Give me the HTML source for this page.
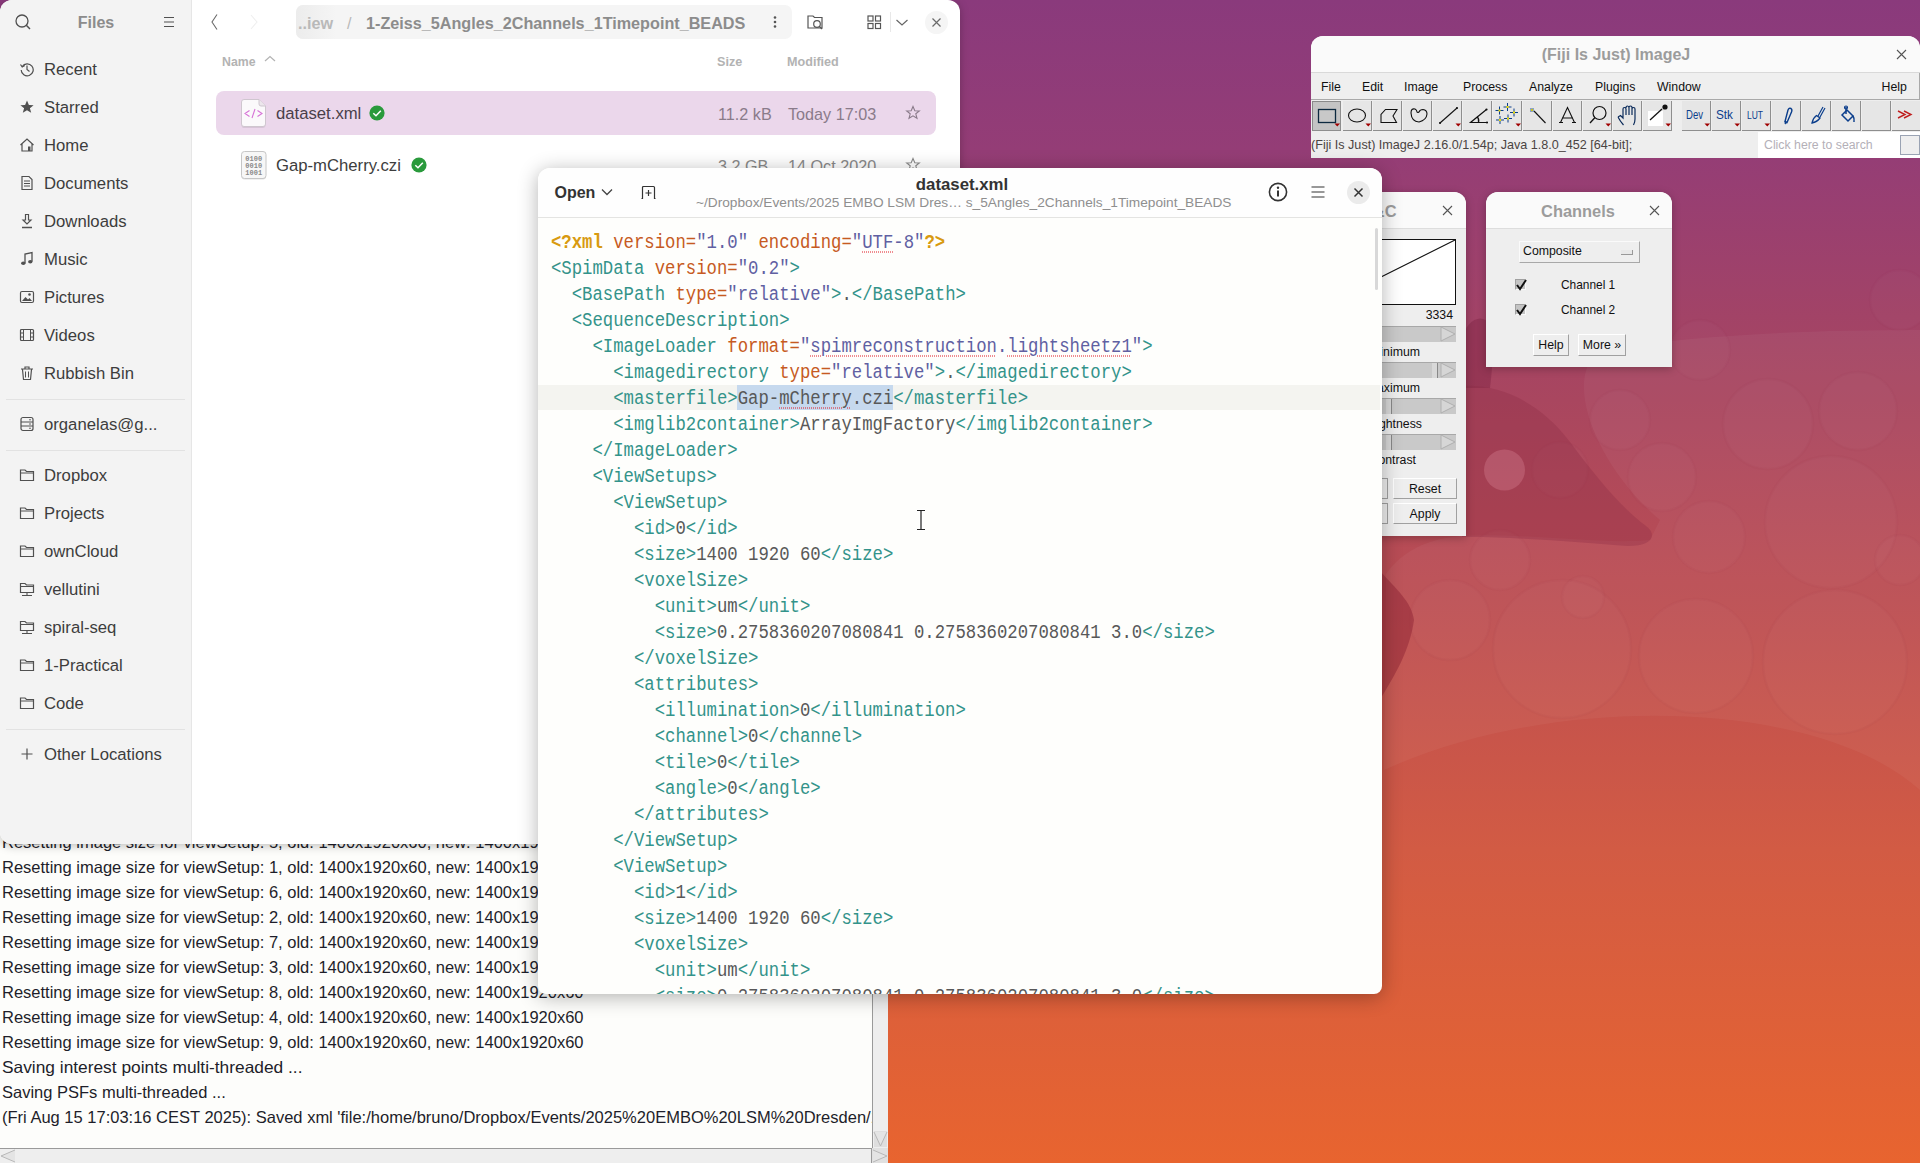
<!DOCTYPE html>
<html><head><meta charset="utf-8"><style>
*{box-sizing:border-box;margin:0;padding:0}
html,body{width:1920px;height:1163px;overflow:hidden}
body{position:relative;font-family:"Liberation Sans",sans-serif;background:linear-gradient(180deg,#8a3a7c 0px,#943d76 150px,#a9465f 400px,#bf4f50 630px,#d25b44 850px,#e8642f 1163px)}
.a{position:absolute}
.t{position:absolute;line-height:0;white-space:pre}
.s{font-family:"Liberation Sans",sans-serif}
.m{font-family:"Liberation Mono",monospace}
.win{position:absolute;overflow:hidden}
</style></head><body>
<svg class="a" style="left:0px;top:0px;" width="1920" height="1163" viewBox="0 0 1920 1163"><path d="M1386,574 C1400,555 1420,540 1460,536 C1520,532 1600,545 1650,540 L1660,520 C1600,470 1560,380 1600,350 C1700,335 1800,330 1920,330 L1920,790 C1820,700 1560,690 1384,770 Z" fill="#ffffff" fill-opacity="0.045"/><circle cx="1831" cy="522" r="66" fill="#ffffff" fill-opacity="0.018" stroke="#801830" stroke-opacity="0.03" stroke-width="2.5"/><circle cx="1709" cy="537" r="36" fill="#ffffff" fill-opacity="0.018" stroke="#801830" stroke-opacity="0.03" stroke-width="2.5"/><circle cx="1696" cy="656" r="57" fill="#ffffff" fill-opacity="0.018" stroke="#801830" stroke-opacity="0.03" stroke-width="2.5"/><circle cx="1562" cy="649" r="69" fill="#ffffff" fill-opacity="0.018" stroke="#801830" stroke-opacity="0.03" stroke-width="2.5"/><circle cx="1835" cy="662" r="72" fill="#ffffff" fill-opacity="0.018" stroke="#801830" stroke-opacity="0.03" stroke-width="2.5"/><circle cx="1662" cy="477" r="34" fill="#ffffff" fill-opacity="0.018" stroke="#801830" stroke-opacity="0.03" stroke-width="2.5"/><circle cx="1768" cy="424" r="45" fill="#ffffff" fill-opacity="0.018" stroke="#801830" stroke-opacity="0.03" stroke-width="2.5"/><circle cx="1858" cy="411" r="39" fill="#ffffff" fill-opacity="0.018" stroke="#801830" stroke-opacity="0.03" stroke-width="2.5"/><circle cx="1583" cy="597" r="21" fill="#ffffff" fill-opacity="0.018" stroke="#801830" stroke-opacity="0.03" stroke-width="2.5"/><circle cx="1500" cy="560" r="30" fill="#ffffff" fill-opacity="0.018" stroke="#801830" stroke-opacity="0.03" stroke-width="2.5"/><circle cx="1620" cy="420" r="30" fill="#ffffff" fill-opacity="0.018" stroke="#801830" stroke-opacity="0.03" stroke-width="2.5"/><circle cx="1560" cy="470" r="28" fill="#ffffff" fill-opacity="0.018" stroke="#801830" stroke-opacity="0.03" stroke-width="2.5"/><circle cx="1450" cy="620" r="40" fill="#ffffff" fill-opacity="0.018" stroke="#801830" stroke-opacity="0.03" stroke-width="2.5"/><circle cx="1900" cy="560" r="25" fill="#ffffff" fill-opacity="0.018" stroke="#801830" stroke-opacity="0.03" stroke-width="2.5"/><circle cx="1900" cy="300" r="30" fill="#ffffff" fill-opacity="0.018" stroke="#801830" stroke-opacity="0.03" stroke-width="2.5"/><circle cx="1700" cy="350" r="30" fill="#ffffff" fill-opacity="0.018" stroke="#801830" stroke-opacity="0.03" stroke-width="2.5"/><path d="M1462,340 C1466,318 1486,310 1492,330 C1494,350 1492,370 1490,388 L1462,388 Z" fill="#7a2040" fill-opacity="0.4"/><path d="M1462,386 C1500,384 1540,402 1570,442 C1600,482 1622,508 1646,526 C1658,535 1652,546 1628,546 C1580,542 1500,536 1462,537 Z" fill="#8c2a44" fill-opacity="0.32"/><circle cx="1504.5" cy="470" r="20.5" fill="#e090a0" fill-opacity="0.3"/><path d="M1381,572 C1395,588 1412,602 1414,620 C1410,650 1395,675 1381,698 Z" fill="#8a2030" fill-opacity="0.45"/></svg>
<div class="win" style="left:1311px;top:36px;width:609px;height:122px;background:#eeeeee;border-radius:12px 12px 0 0"><div class="a" style="left:-1311px;top:-36px">
<div class="a" style="left:1311px;top:36px;width:609px;height:36px;background:#fafafa;"></div>
<div class="a" style="left:1311px;top:72px;width:609px;height:1px;background:#d9d9d9;"></div>
<div class="a" style="left:1311px;top:73px;width:609px;height:26px;background:#efefef;"></div>
<div class="a" style="left:1311px;top:99px;width:609px;height:1px;background:#a9a9a9;"></div>
<div class="a" style="left:1919px;top:73px;width:1px;height:26px;background:#a9a9a9;"></div>
<div class="t s" style="left:1616px;top:55.46px;font-size:16px;color:#9c9c9c;font-weight:700;transform:translateX(-50%);">(Fiji Is Just) ImageJ</div>
<svg class="a" style="left:1896px;top:49px;" width="11" height="11" viewBox="0 0 11 11"><path d="M1,1L10,10M10,1L1,10" stroke="#555" stroke-width="1.1"/></svg>
<div class="t s" style="left:1321px;top:86.74px;font-size:12.3px;color:#111111;">File</div>
<div class="t s" style="left:1362px;top:86.74px;font-size:12.3px;color:#111111;">Edit</div>
<div class="t s" style="left:1404px;top:86.74px;font-size:12.3px;color:#111111;">Image</div>
<div class="t s" style="left:1463px;top:86.74px;font-size:12.3px;color:#111111;">Process</div>
<div class="t s" style="left:1529px;top:86.74px;font-size:12.3px;color:#111111;">Analyze</div>
<div class="t s" style="left:1595px;top:86.74px;font-size:12.3px;color:#111111;">Plugins</div>
<div class="t s" style="left:1657px;top:86.74px;font-size:12.3px;color:#111111;">Window</div>
<div class="t s" style="left:1881.5px;top:86.74px;font-size:12.3px;color:#111111;">Help</div>
<div class="a" style="left:1312px;top:101px;width:29px;height:30px;background:#c4c4c4;border-right:1px solid #8e8e8e;border-bottom:1px solid #8e8e8e;border-left:1px solid #8a8a8a;border-top:1px solid #8a8a8a;"></div>
<svg class="a" style="left:1312px;top:101px;" width="29" height="28" viewBox="0 0 29 28"><g transform="translate(2,1)"><rect x="4.5" y="7.5" width="17" height="13" fill="#c8c8c8" stroke="#0d2a40" stroke-width="1.3"/></g><path d="M22.5,22.5 L28,22.5 L25.25,25.5 Z" fill="#a00000"/></svg>
<div class="a" style="left:1343px;top:101px;width:29px;height:30px;background:#e6e6e6;border-right:1px solid #8e8e8e;border-bottom:1px solid #8e8e8e;"></div>
<svg class="a" style="left:1343px;top:101px;" width="29" height="28" viewBox="0 0 29 28"><g transform="translate(2,1)"><ellipse cx="12" cy="13.5" rx="8.5" ry="6.5" fill="none" stroke="#111" stroke-width="1.1"/></g><path d="M22.5,22.5 L28,22.5 L25.25,25.5 Z" fill="#a00000"/></svg>
<div class="a" style="left:1373px;top:101px;width:29px;height:30px;background:#e6e6e6;border-right:1px solid #8e8e8e;border-bottom:1px solid #8e8e8e;"></div>
<svg class="a" style="left:1373px;top:101px;" width="29" height="28" viewBox="0 0 29 28"><g transform="translate(2,1)"><path d="M6,20.5 V12.5 L10.5,7.5 H22 L18,14 L21.5,20.5 Z" fill="none" stroke="#111" stroke-width="1.1"/></g></svg>
<div class="a" style="left:1403px;top:101px;width:29px;height:30px;background:#e6e6e6;border-right:1px solid #8e8e8e;border-bottom:1px solid #8e8e8e;"></div>
<svg class="a" style="left:1403px;top:101px;" width="29" height="28" viewBox="0 0 29 28"><g transform="translate(2,1)"><path d="M6,11 Q6,6 10,7 Q12,8 12,10 Q12.5,11 14,10 Q15,7.5 18,7.5 Q22,8 22,12 Q21.5,18 14,20 Q6.5,19.5 6,11 Z" fill="none" stroke="#111" stroke-width="1.1"/></g></svg>
<div class="a" style="left:1433px;top:101px;width:29px;height:30px;background:#e6e6e6;border-right:1px solid #8e8e8e;border-bottom:1px solid #8e8e8e;"></div>
<svg class="a" style="left:1433px;top:101px;" width="29" height="28" viewBox="0 0 29 28"><g transform="translate(2,1)"><path d="M5,21 L22,6" stroke="#111" stroke-width="1.1"/><circle cx="5" cy="21" r="1.1" fill="#111"/><circle cx="22" cy="6" r="1.1" fill="#111"/></g><path d="M22.5,22.5 L28,22.5 L25.25,25.5 Z" fill="#a00000"/></svg>
<div class="a" style="left:1463px;top:101px;width:29px;height:30px;background:#e6e6e6;border-right:1px solid #8e8e8e;border-bottom:1px solid #8e8e8e;"></div>
<svg class="a" style="left:1463px;top:101px;" width="29" height="28" viewBox="0 0 29 28"><g transform="translate(2,1)"><path d="M21.5,7.5 L5.5,20.5 H22 M12,14.5 Q14.5,17 13.5,20.5" fill="none" stroke="#111" stroke-width="1.2"/><circle cx="21.5" cy="7.5" r="1.1" fill="#111"/><circle cx="22" cy="20.5" r="1.1" fill="#111"/></g></svg>
<div class="a" style="left:1493px;top:101px;width:29px;height:30px;background:#e6e6e6;border-right:1px solid #8e8e8e;border-bottom:1px solid #8e8e8e;"></div>
<svg class="a" style="left:1493px;top:101px;" width="29" height="28" viewBox="0 0 29 28"><g transform="translate(2,1)"><path d="M0.5,8.5 H8.5 M4.5,4.5 V12.5" stroke="#0b3e8c" stroke-width="1"/><rect x="3.5" y="7.5" width="2" height="2" fill="#f0e000"/><path d="M8.5,5 H16.5 M12.5,1 V9" stroke="#0b3e8c" stroke-width="1"/><rect x="11.5" y="4" width="2" height="2" fill="#f0e000"/><path d="M15,10.5 H23 M19,6.5 V14.5" stroke="#0b3e8c" stroke-width="1"/><rect x="18" y="9.5" width="2" height="2" fill="#f0e000"/><path d="M1,18 H9 M5,14 V22" stroke="#0b3e8c" stroke-width="1"/><rect x="4" y="17" width="2" height="2" fill="#f0e000"/><path d="M9,16.5 H17 M13,12.5 V20.5" stroke="#0b3e8c" stroke-width="1"/><rect x="12" y="15.5" width="2" height="2" fill="#f0e000"/></g><path d="M22.5,22.5 L28,22.5 L25.25,25.5 Z" fill="#a00000"/></svg>
<div class="a" style="left:1523px;top:101px;width:29px;height:30px;background:#e6e6e6;border-right:1px solid #8e8e8e;border-bottom:1px solid #8e8e8e;"></div>
<svg class="a" style="left:1523px;top:101px;" width="29" height="28" viewBox="0 0 29 28"><g transform="translate(2,1)"><path d="M9,9 L20.5,21" stroke="#111" stroke-width="1.1"/><path d="M5,8 H9 M7,6 V10 M5.5,6.5 L8.5,9.5 M8.5,6.5 L5.5,9.5" stroke="#0b3e8c" stroke-width=".8"/><circle cx="7" cy="8" r="1.1" fill="#f0e000"/></g></svg>
<div class="a" style="left:1553px;top:101px;width:29px;height:30px;background:#e6e6e6;border-right:1px solid #8e8e8e;border-bottom:1px solid #8e8e8e;"></div>
<svg class="a" style="left:1553px;top:101px;" width="29" height="28" viewBox="0 0 29 28"><g transform="translate(2,1)"><path d="M5.5,20.5 L12.5,5.5 L19.5,20.5 M7,16 H18 M4,20.5H8 M17,20.5H21" fill="none" stroke="#111" stroke-width="1.1"/></g></svg>
<div class="a" style="left:1583px;top:101px;width:29px;height:30px;background:#e6e6e6;border-right:1px solid #8e8e8e;border-bottom:1px solid #8e8e8e;"></div>
<svg class="a" style="left:1583px;top:101px;" width="29" height="28" viewBox="0 0 29 28"><g transform="translate(2,1)"><circle cx="14.5" cy="11" r="6.5" fill="none" stroke="#111" stroke-width="1.2"/><path d="M10,15.5 L5,21" stroke="#111" stroke-width="1.3"/></g><path d="M22.5,22.5 L28,22.5 L25.25,25.5 Z" fill="#a00000"/></svg>
<div class="a" style="left:1613px;top:101px;width:29px;height:30px;background:#e6e6e6;border-right:1px solid #8e8e8e;border-bottom:1px solid #8e8e8e;"></div>
<svg class="a" style="left:1613px;top:101px;" width="29" height="28" viewBox="0 0 29 28"><g transform="translate(2,1)"><path d="M3,15 L5.5,13.5 L8,16 V7 Q8,5.5 9.5,5.5 Q11,5.5 11,7 V13 M11,6 Q11,4 12.5,4 Q14,4 14,6 V13 M14,5.5 Q14,4 15.5,4 Q17,4 17,5.5 V13 M17,7 Q17,5.5 18.5,5.5 Q20,5.5 20,7 V17 Q20,20.5 18.5,23 M3,15 Q5,19 8.5,23" fill="none" stroke="#0a2a5a" stroke-width="1.2"/></g></svg>
<div class="a" style="left:1643px;top:101px;width:29px;height:30px;background:#e6e6e6;border-right:1px solid #8e8e8e;border-bottom:1px solid #8e8e8e;"></div>
<svg class="a" style="left:1643px;top:101px;" width="29" height="28" viewBox="0 0 29 28"><g transform="translate(2,1)"><rect x="3" y="9" width="15" height="15" fill="#fff"/><path d="M5,18 L17,7" stroke="#111" stroke-width="1.3"/><circle cx="20" cy="5" r="2.6" fill="#111"/></g><path d="M22.5,22.5 L28,22.5 L25.25,25.5 Z" fill="#a00000"/></svg>
<div class="a" style="left:1682px;top:101px;width:29px;height:30px;background:#e6e6e6;border-right:1px solid #8e8e8e;border-bottom:1px solid #8e8e8e;"></div>
<svg class="a" style="left:1682px;top:101px;" width="29" height="28" viewBox="0 0 29 28"><g transform="translate(2,1)"><text x="2" y="17" font-family="Liberation Sans" font-size="12" fill="#0b3e8c" textLength="17" lengthAdjust="spacingAndGlyphs">Dev</text></g><path d="M22.5,22.5 L28,22.5 L25.25,25.5 Z" fill="#a00000"/></svg>
<div class="a" style="left:1712px;top:101px;width:29px;height:30px;background:#e6e6e6;border-right:1px solid #8e8e8e;border-bottom:1px solid #8e8e8e;"></div>
<svg class="a" style="left:1712px;top:101px;" width="29" height="28" viewBox="0 0 29 28"><g transform="translate(2,1)"><text x="2" y="17" font-family="Liberation Sans" font-size="12" fill="#0b3e8c" textLength="17" lengthAdjust="spacingAndGlyphs">Stk</text></g><path d="M22.5,22.5 L28,22.5 L25.25,25.5 Z" fill="#a00000"/></svg>
<div class="a" style="left:1742px;top:101px;width:29px;height:30px;background:#e6e6e6;border-right:1px solid #8e8e8e;border-bottom:1px solid #8e8e8e;"></div>
<svg class="a" style="left:1742px;top:101px;" width="29" height="28" viewBox="0 0 29 28"><g transform="translate(2,1)"><text x="3" y="17" font-family="Liberation Sans" font-size="11.5" fill="#0b3e8c" textLength="16" lengthAdjust="spacingAndGlyphs">LUT</text></g><path d="M22.5,22.5 L28,22.5 L25.25,25.5 Z" fill="#a00000"/></svg>
<div class="a" style="left:1772px;top:101px;width:29px;height:30px;background:#e6e6e6;border-right:1px solid #8e8e8e;border-bottom:1px solid #8e8e8e;"></div>
<svg class="a" style="left:1772px;top:101px;" width="29" height="28" viewBox="0 0 29 28"><g transform="translate(2,1)"><path d="M11,19.5 L14,8 Q15,5.5 17,6.5 Q18.5,7.5 17.5,10 L13,20.5 Z" fill="none" stroke="#0b3e8c" stroke-width="1.4"/><path d="M11,19.5 L11.2,22 L13,20.5 Z" fill="#0b3e8c" stroke="#0b3e8c"/></g></svg>
<div class="a" style="left:1802px;top:101px;width:29px;height:30px;background:#e6e6e6;border-right:1px solid #8e8e8e;border-bottom:1px solid #8e8e8e;"></div>
<svg class="a" style="left:1802px;top:101px;" width="29" height="28" viewBox="0 0 29 28"><g transform="translate(2,1)"><path d="M14,14 L19,5 M16,15 L21,6" stroke="#0b3e8c" stroke-width="1.2"/><path d="M8,21 Q9,16 12.5,13.5 L16,16 Q13,20 8,21 Z" fill="none" stroke="#0b3e8c" stroke-width="1.3"/></g></svg>
<div class="a" style="left:1832px;top:101px;width:29px;height:30px;background:#e6e6e6;border-right:1px solid #8e8e8e;border-bottom:1px solid #8e8e8e;"></div>
<svg class="a" style="left:1832px;top:101px;" width="29" height="28" viewBox="0 0 29 28"><g transform="translate(2,1)"><path d="M8,13 L13,8 L19,14 L14,19 Z" fill="none" stroke="#0b3e8c" stroke-width="1.5"/><path d="M12,5 V12 M19,14 Q20.5,16 20,20" fill="none" stroke="#0b3e8c" stroke-width="1.5"/><circle cx="12" cy="5.5" r="1.5" fill="none" stroke="#0b3e8c" stroke-width="1.2"/></g></svg>
<div class="a" style="left:1862px;top:101px;width:29px;height:30px;background:#e6e6e6;border-right:1px solid #8e8e8e;border-bottom:1px solid #8e8e8e;"></div>
<svg class="a" style="left:1862px;top:101px;" width="29" height="28" viewBox="0 0 29 28"><g transform="translate(2,1)"></g></svg>
<div class="a" style="left:1892px;top:101px;width:29px;height:30px;background:#e6e6e6;border-right:1px solid #8e8e8e;border-bottom:1px solid #8e8e8e;"></div>
<svg class="a" style="left:1892px;top:101px;" width="29" height="28" viewBox="0 0 29 28"><g transform="translate(2,1)"><path d="M4,9 L11,12.5 L4,16 M10,9 L17,12.5 L10,16" fill="none" stroke="#c02020" stroke-width="1.4"/></g></svg>
<div class="t s" style="left:1311px;top:145.13px;font-size:12.6px;color:#4a4442;">(Fiji Is Just) ImageJ 2.16.0/1.54p; Java 1.8.0_452 [64-bit];</div>
<div class="a" style="left:1758px;top:132px;width:162px;height:26px;background:#ffffff;"></div>
<div class="t s" style="left:1764px;top:145.24px;font-size:12.3px;color:#b4b0b8;">Click here to search</div>
<div class="a" style="left:1900px;top:135px;width:20px;height:20px;background:#eeeeee;border:1px solid #9aa3b3"></div>
</div></div>
<div class="win" style="left:1300px;top:192px;width:166px;height:344px;background:#eeeeee;border-radius:12px 12px 0 0;box-shadow:0 2px 8px rgba(0,0,0,.25)"><div class="a" style="left:-1300px;top:-192px">
<div class="a" style="left:1300px;top:192px;width:166px;height:36px;background:#fafafa;"></div>
<div class="a" style="left:1300px;top:228px;width:166px;height:1px;background:#dddddd;"></div>
<div class="t s" style="left:1361px;top:211.32px;font-size:16.4px;color:#9c9c9c;font-weight:700;">B&amp;C</div>
<svg class="a" style="left:1442px;top:205px;" width="11" height="11" viewBox="0 0 11 11"><path d="M1,1L10,10M10,1L1,10" stroke="#555" stroke-width="1.1"/></svg>
<div class="a" style="left:1300px;top:239px;width:156px;height:66px;background:#ffffff;border:1.5px solid #111"></div>
<svg class="a" style="left:1300px;top:239px;" width="156" height="66" viewBox="0 0 156 66"><path d="M40,58.5 L155,1" stroke="#111" stroke-width="1.1"/></svg>
<div class="t s" style="left:1453px;top:314.74px;font-size:12.3px;color:#111;transform:translateX(-100%);">3334</div>
<div class="a" style="left:1300px;top:326px;width:156px;height:16px;background:#c9c9c9;border-top:1px solid #a8a8a8"></div>
<svg class="a" style="left:1440px;top:326px;" width="16" height="16" viewBox="0 0 16 16"><path d="M1,1 L15,8 L1,15 Z" fill="#d6d6d6" stroke="#b0b0b0" stroke-width="1"/></svg>
<div class="t s" style="left:1420px;top:352.24px;font-size:12.3px;color:#111;transform:translateX(-100%);">Minimum</div>
<div class="a" style="left:1300px;top:362px;width:156px;height:16px;background:#c9c9c9;border-top:1px solid #a8a8a8"></div>
<svg class="a" style="left:1440px;top:362px;" width="16" height="16" viewBox="0 0 16 16"><path d="M1,1 L15,8 L1,15 Z" fill="#d6d6d6" stroke="#b0b0b0" stroke-width="1"/></svg>
<div class="a" style="left:1432px;top:363px;width:6px;height:15px;background:#d8d8d8;border-right:1px solid #888"></div>
<div class="t s" style="left:1420px;top:388.24px;font-size:12.3px;color:#111;transform:translateX(-100%);">Maximum</div>
<div class="a" style="left:1300px;top:398px;width:156px;height:16px;background:#c9c9c9;border-top:1px solid #a8a8a8"></div>
<svg class="a" style="left:1440px;top:398px;" width="16" height="16" viewBox="0 0 16 16"><path d="M1,1 L15,8 L1,15 Z" fill="#d6d6d6" stroke="#b0b0b0" stroke-width="1"/></svg>
<div class="a" style="left:1386px;top:399px;width:6px;height:15px;background:#d8d8d8;border-right:1px solid #888"></div>
<div class="t s" style="left:1422px;top:424.24px;font-size:12.3px;color:#111;transform:translateX(-100%);">Brightness</div>
<div class="a" style="left:1300px;top:434px;width:156px;height:16px;background:#c9c9c9;border-top:1px solid #a8a8a8"></div>
<svg class="a" style="left:1440px;top:434px;" width="16" height="16" viewBox="0 0 16 16"><path d="M1,1 L15,8 L1,15 Z" fill="#d6d6d6" stroke="#b0b0b0" stroke-width="1"/></svg>
<div class="a" style="left:1386px;top:435px;width:6px;height:15px;background:#d8d8d8;border-right:1px solid #888"></div>
<div class="t s" style="left:1416px;top:460.24px;font-size:12.3px;color:#111;transform:translateX(-100%);">Contrast</div>
<div class="a" style="left:1393px;top:478px;width:64px;height:21px;background:#eeeeee;border:1px solid #a0a0a0;border-top-color:#fff;border-left-color:#fff"></div>
<div class="t s" style="left:1425px;top:488.74px;font-size:12.3px;color:#111;transform:translateX(-50%);">Reset</div>
<div class="a" style="left:1300px;top:478px;width:88px;height:21px;background:#eeeeee;border:1px solid #a0a0a0"></div>
<div class="a" style="left:1393px;top:503px;width:64px;height:21px;background:#eeeeee;border:1px solid #a0a0a0;border-top-color:#fff;border-left-color:#fff"></div>
<div class="t s" style="left:1425px;top:513.74px;font-size:12.3px;color:#111;transform:translateX(-50%);">Apply</div>
<div class="a" style="left:1300px;top:503px;width:88px;height:21px;background:#eeeeee;border:1px solid #a0a0a0"></div>
</div></div>
<div class="win" style="left:1486px;top:192px;width:186px;height:175px;background:#eeeeee;border-radius:12px 12px 0 0;box-shadow:0 2px 8px rgba(0,0,0,.25)"><div class="a" style="left:-1486px;top:-192px">
<div class="a" style="left:1486px;top:192px;width:186px;height:36px;background:#fafafa;"></div>
<div class="a" style="left:1486px;top:228px;width:186px;height:1px;background:#dddddd;"></div>
<div class="t s" style="left:1578px;top:211.32px;font-size:16.4px;color:#9c9c9c;font-weight:700;transform:translateX(-50%);">Channels</div>
<svg class="a" style="left:1649px;top:205px;" width="11" height="11" viewBox="0 0 11 11"><path d="M1,1L10,10M10,1L1,10" stroke="#555" stroke-width="1.1"/></svg>
<div class="a" style="left:1519px;top:241px;width:121px;height:22px;background:#eeeeee;border:1px solid #a8a8a8;border-top-color:#fafafa;border-left-color:#fafafa"></div>
<div class="t s" style="left:1523px;top:250.74px;font-size:12.3px;color:#111;">Composite</div>
<div class="a" style="left:1621px;top:250px;width:12px;height:5px;background:#e8e8e8;border-right:1px solid #999;border-bottom:1px solid #999"></div>
<div class="a" style="left:1515px;top:279px;width:11px;height:11px;background:#c4c4c4;border-top:1px solid #a0a0a0;border-left:1px solid #a0a0a0;border-right:1px solid #fafafa;border-bottom:1px solid #fafafa"></div>
<svg class="a" style="left:1514px;top:278px;" width="14" height="14" viewBox="0 0 14 14"><path d="M3,7 L6,11 L12,2" fill="none" stroke="#111" stroke-width="2"/></svg>
<div class="t s" style="left:1561px;top:285.38px;font-size:11.9px;color:#111;">Channel 1</div>
<div class="a" style="left:1515px;top:304px;width:11px;height:11px;background:#c4c4c4;border-top:1px solid #a0a0a0;border-left:1px solid #a0a0a0;border-right:1px solid #fafafa;border-bottom:1px solid #fafafa"></div>
<svg class="a" style="left:1514px;top:303px;" width="14" height="14" viewBox="0 0 14 14"><path d="M3,7 L6,11 L12,2" fill="none" stroke="#111" stroke-width="2"/></svg>
<div class="t s" style="left:1561px;top:309.88px;font-size:11.9px;color:#111;">Channel 2</div>
<div class="a" style="left:1533px;top:334px;width:36px;height:22px;background:#eeeeee;border:1px solid #a0a0a0;border-top-color:#fff;border-left-color:#fff"></div>
<div class="t s" style="left:1551.0px;top:344.74px;font-size:12.3px;color:#111;transform:translateX(-50%);">Help</div>
<div class="a" style="left:1578px;top:334px;width:48px;height:22px;background:#eeeeee;border:1px solid #a0a0a0;border-top-color:#fff;border-left-color:#fff"></div>
<div class="t s" style="left:1602.0px;top:344.74px;font-size:12.3px;color:#111;transform:translateX(-50%);">More »</div>
</div></div>
<div class="win" style="left:0;top:780px;width:888px;height:383px;background:#fdfdfb"><div class="a" style="left:0;top:-780px">
<div class="t s" style="left:2px;top:842.28px;font-size:16.5px;color:#1e1e2a;">Resetting image size for viewSetup: 5, old: 1400x1920x60, new: 1400x1920x60</div>
<div class="t s" style="left:2px;top:867.28px;font-size:16.5px;color:#1e1e2a;">Resetting image size for viewSetup: 1, old: 1400x1920x60, new: 1400x1920x60</div>
<div class="t s" style="left:2px;top:892.28px;font-size:16.5px;color:#1e1e2a;">Resetting image size for viewSetup: 6, old: 1400x1920x60, new: 1400x1920x60</div>
<div class="t s" style="left:2px;top:917.28px;font-size:16.5px;color:#1e1e2a;">Resetting image size for viewSetup: 2, old: 1400x1920x60, new: 1400x1920x60</div>
<div class="t s" style="left:2px;top:942.28px;font-size:16.5px;color:#1e1e2a;">Resetting image size for viewSetup: 7, old: 1400x1920x60, new: 1400x1920x60</div>
<div class="t s" style="left:2px;top:967.28px;font-size:16.5px;color:#1e1e2a;">Resetting image size for viewSetup: 3, old: 1400x1920x60, new: 1400x1920x60</div>
<div class="t s" style="left:2px;top:992.28px;font-size:16.5px;color:#1e1e2a;">Resetting image size for viewSetup: 8, old: 1400x1920x60, new: 1400x1920x60</div>
<div class="t s" style="left:2px;top:1017.28px;font-size:16.5px;color:#1e1e2a;">Resetting image size for viewSetup: 4, old: 1400x1920x60, new: 1400x1920x60</div>
<div class="t s" style="left:2px;top:1042.28px;font-size:16.5px;color:#1e1e2a;">Resetting image size for viewSetup: 9, old: 1400x1920x60, new: 1400x1920x60</div>
<div class="t s" style="left:2px;top:1067.28px;font-size:16.5px;color:#1e1e2a;transform:scaleX(1.05);transform-origin:0 0">Saving interest points multi-threaded ...</div>
<div class="t s" style="left:2px;top:1092.28px;font-size:16.5px;color:#1e1e2a;">Saving PSFs multi-threaded ...</div>
<div class="t s" style="left:2px;top:1117.28px;font-size:16.5px;color:#1e1e2a;">(Fri Aug 15 17:03:16 CEST 2025): Saved xml 'file:/home/bruno/Dropbox/Events/2025%20EMBO%20LSM%20Dresden/1-Zeiss_5Angles_2Channels_1Timepoint_BEADS/dataset.xml'</div>
<div class="a" style="left:872px;top:780px;width:16px;height:368px;background:#eeeeee;border-left:1px solid #9a9a9a"></div>
<div class="a" style="left:874px;top:1131px;width:13px;height:16px;background:#dedede;"></div>
<svg class="a" style="left:873px;top:1131px;" width="15" height="17" viewBox="0 0 15 17"><path d="M1,1 L7.5,15 L14,1" fill="#e4e4e4" stroke="#b8b8b8" stroke-width="1"/></svg>
<div class="a" style="left:0px;top:1148px;width:888px;height:15px;background:#eeeeee;border-top:1px solid #9a9a9a"></div>
<svg class="a" style="left:0px;top:1149px;" width="16" height="14" viewBox="0 0 16 14"><path d="M15,1 L1,7 L15,13" fill="#e4e4e4" stroke="#b8b8b8" stroke-width="1"/></svg>
<div class="a" style="left:871px;top:1148px;width:17px;height:15px;background:#e0e0e0;border-left:1px solid #9a9a9a"></div>
<svg class="a" style="left:872px;top:1149px;" width="16" height="14" viewBox="0 0 16 14"><path d="M1,1 L15,7 L1,13" fill="#e4e4e4" stroke="#b8b8b8" stroke-width="1"/></svg>
</div></div>
<div class="win" style="left:0;top:0;width:960px;height:844px;background:#ffffff;border-radius:12px;box-shadow:0 2px 10px rgba(0,0,0,.25)">
<div class="a" style="left:0px;top:0px;width:191px;height:844px;background:#f3f3f3;"></div>
<div class="a" style="left:191px;top:0px;width:1px;height:844px;background:#e6e6e6;"></div>
<svg class="a" style="left:14px;top:13px;" width="18" height="18" viewBox="0 0 18 18"><circle cx="8" cy="8" r="6" fill="none" stroke="#505050" stroke-width="1.3"/><path d="M12.3,12.3 L16,16" stroke="#505050" stroke-width="1.5"/></svg>
<div class="t s" style="left:96px;top:23.46px;font-size:16px;color:#8c8c8c;font-weight:700;transform:translateX(-50%);">Files</div>
<svg class="a" style="left:163px;top:15px;" width="12" height="14" viewBox="0 0 12 14"><path d="M1,2.5H11M1,7H11M1,11.5H11" stroke="#505050" stroke-width="1.2"/></svg>
<svg class="a" style="left:19px;top:61px;" width="16" height="16" viewBox="0 0 16 16"><path d="M3.2,5.5 A6,6 0 1 1 2.2,9" fill="none" stroke="#505050" stroke-width="1.2"/><path d="M1.5,3.5 L3.2,6 L5.8,4.5" fill="none" stroke="#505050" stroke-width="1.2"/><path d="M8,4.5V8.5L10.5,10.5" fill="none" stroke="#505050" stroke-width="1.2"/></svg>
<div class="t s" style="left:44px;top:70.21px;font-size:16.7px;color:#3d3d3d;">Recent</div>
<svg class="a" style="left:19px;top:99px;" width="16" height="16" viewBox="0 0 16 16"><path d="M8,1.5 L9.9,6 L14.6,6.2 L10.9,9.2 L12.2,13.8 L8,11.2 L3.8,13.8 L5.1,9.2 L1.4,6.2 L6.1,6 Z" fill="#505050"/></svg>
<div class="t s" style="left:44px;top:108.21px;font-size:16.7px;color:#3d3d3d;">Starred</div>
<svg class="a" style="left:19px;top:137px;" width="16" height="16" viewBox="0 0 16 16"><path d="M1.5,8 L8,2 L14.5,8 M3,7 V14 H13 V7" fill="none" stroke="#505050" stroke-width="1.2"/><rect x="9" y="9.5" width="2.5" height="4.5" fill="#505050"/></svg>
<div class="t s" style="left:44px;top:146.21px;font-size:16.7px;color:#3d3d3d;">Home</div>
<svg class="a" style="left:19px;top:175px;" width="16" height="16" viewBox="0 0 16 16"><path d="M3,1.5 H10 L13,4.5 V14.5 H3 Z" fill="none" stroke="#505050" stroke-width="1.2"/><path d="M5,6H11M5,8.5H11M5,11H11" stroke="#505050" stroke-width="1"/></svg>
<div class="t s" style="left:44px;top:184.21px;font-size:16.7px;color:#3d3d3d;">Documents</div>
<svg class="a" style="left:19px;top:213px;" width="16" height="16" viewBox="0 0 16 16"><path d="M6.5,1.5 H9.5 V7 H12 L8,11 L4,7 H6.5 Z" fill="none" stroke="#505050" stroke-width="1.2"/><path d="M3,14.5 H13" stroke="#505050" stroke-width="1.3"/></svg>
<div class="t s" style="left:44px;top:222.21px;font-size:16.7px;color:#3d3d3d;">Downloads</div>
<svg class="a" style="left:19px;top:251px;" width="16" height="16" viewBox="0 0 16 16"><path d="M6,12 V3 L13,1.5 V10.5" fill="none" stroke="#505050" stroke-width="1.3"/><ellipse cx="4.3" cy="12.3" rx="2.2" ry="1.8" fill="#505050"/><ellipse cx="11.3" cy="10.8" rx="2.2" ry="1.8" fill="#505050"/></svg>
<div class="t s" style="left:44px;top:260.21px;font-size:16.7px;color:#3d3d3d;">Music</div>
<svg class="a" style="left:19px;top:289px;" width="16" height="16" viewBox="0 0 16 16"><rect x="1.5" y="2.5" width="13" height="11" rx="1.5" fill="none" stroke="#505050" stroke-width="1.2"/><path d="M3,12 L6.5,8 L9,10.5 L10.5,9 L13,12 Z" fill="#505050"/><circle cx="10.5" cy="5.5" r="1.3" fill="#505050"/></svg>
<div class="t s" style="left:44px;top:298.21px;font-size:16.7px;color:#3d3d3d;">Pictures</div>
<svg class="a" style="left:19px;top:327px;" width="16" height="16" viewBox="0 0 16 16"><rect x="1.5" y="2.5" width="13" height="11" rx="1" fill="none" stroke="#505050" stroke-width="1.2"/><path d="M4.5,2.5V13.5M11.5,2.5V13.5M1.5,6H4.5M1.5,10H4.5M11.5,6H14.5M11.5,10H14.5" stroke="#505050" stroke-width="1"/></svg>
<div class="t s" style="left:44px;top:336.21px;font-size:16.7px;color:#3d3d3d;">Videos</div>
<svg class="a" style="left:19px;top:365px;" width="16" height="16" viewBox="0 0 16 16"><path d="M2,4 H14 M6,4 V2 H10 V4 M3.5,4.5 L4.5,14.5 H11.5 L12.5,4.5" fill="none" stroke="#505050" stroke-width="1.2"/><path d="M6.5,6.5V12.5M9.5,6.5V12.5" stroke="#505050" stroke-width="1"/></svg>
<div class="t s" style="left:44px;top:374.21px;font-size:16.7px;color:#3d3d3d;">Rubbish Bin</div>
<svg class="a" style="left:19px;top:416px;" width="16" height="16" viewBox="0 0 16 16"><rect x="2" y="1.5" width="12" height="13" rx="2" fill="none" stroke="#505050" stroke-width="1.2"/><path d="M2,6H14M2,10H14" stroke="#505050" stroke-width="1.1"/><circle cx="11" cy="3.8" r=".8" fill="#505050"/><circle cx="11" cy="8" r=".8" fill="#505050"/><circle cx="11" cy="12.2" r=".8" fill="#505050"/></svg>
<div class="t s" style="left:44px;top:425.21px;font-size:16.7px;color:#3d3d3d;">organelas@g...</div>
<svg class="a" style="left:19px;top:467px;" width="16" height="16" viewBox="0 0 16 16"><path d="M1.5,3 H6 L7.5,4.5 H14.5 V13.5 H1.5 Z M1.5,6 H14.5" fill="none" stroke="#505050" stroke-width="1.2"/></svg>
<div class="t s" style="left:44px;top:476.21px;font-size:16.7px;color:#3d3d3d;">Dropbox</div>
<svg class="a" style="left:19px;top:505px;" width="16" height="16" viewBox="0 0 16 16"><path d="M1.5,3 H6 L7.5,4.5 H14.5 V13.5 H1.5 Z M1.5,6 H14.5" fill="none" stroke="#505050" stroke-width="1.2"/></svg>
<div class="t s" style="left:44px;top:514.21px;font-size:16.7px;color:#3d3d3d;">Projects</div>
<svg class="a" style="left:19px;top:543px;" width="16" height="16" viewBox="0 0 16 16"><path d="M1.5,3 H6 L7.5,4.5 H14.5 V13.5 H1.5 Z M1.5,6 H14.5" fill="none" stroke="#505050" stroke-width="1.2"/></svg>
<div class="t s" style="left:44px;top:552.21px;font-size:16.7px;color:#3d3d3d;">ownCloud</div>
<svg class="a" style="left:19px;top:581px;" width="16" height="16" viewBox="0 0 16 16"><path d="M1.5,2.5 H6 L7.5,4 H14.5 V11.5 H1.5 Z M1.5,5.5 H14.5" fill="none" stroke="#505050" stroke-width="1.2"/><path d="M3,14.5H13M8,11.5V14.5" stroke="#505050" stroke-width="1.1"/></svg>
<div class="t s" style="left:44px;top:590.21px;font-size:16.7px;color:#3d3d3d;">vellutini</div>
<svg class="a" style="left:19px;top:619px;" width="16" height="16" viewBox="0 0 16 16"><path d="M1.5,2.5 H6 L7.5,4 H14.5 V11.5 H1.5 Z M1.5,5.5 H14.5" fill="none" stroke="#505050" stroke-width="1.2"/><path d="M3,14.5H13M8,11.5V14.5" stroke="#505050" stroke-width="1.1"/></svg>
<div class="t s" style="left:44px;top:628.21px;font-size:16.7px;color:#3d3d3d;">spiral-seq</div>
<svg class="a" style="left:19px;top:657px;" width="16" height="16" viewBox="0 0 16 16"><path d="M1.5,3 H6 L7.5,4.5 H14.5 V13.5 H1.5 Z M1.5,6 H14.5" fill="none" stroke="#505050" stroke-width="1.2"/></svg>
<div class="t s" style="left:44px;top:666.21px;font-size:16.7px;color:#3d3d3d;">1-Practical</div>
<svg class="a" style="left:19px;top:695px;" width="16" height="16" viewBox="0 0 16 16"><path d="M1.5,3 H6 L7.5,4.5 H14.5 V13.5 H1.5 Z M1.5,6 H14.5" fill="none" stroke="#505050" stroke-width="1.2"/></svg>
<div class="t s" style="left:44px;top:704.21px;font-size:16.7px;color:#3d3d3d;">Code</div>
<svg class="a" style="left:19px;top:746px;" width="16" height="16" viewBox="0 0 16 16"><path d="M8,2.5V13.5M2.5,8H13.5" stroke="#505050" stroke-width="1.2"/></svg>
<div class="t s" style="left:44px;top:755.21px;font-size:16.7px;color:#3d3d3d;">Other Locations</div>
<div class="a" style="left:6px;top:399px;width:179px;height:1px;background:#e2e2e2;"></div>
<div class="a" style="left:6px;top:450px;width:179px;height:1px;background:#e2e2e2;"></div>
<div class="a" style="left:6px;top:729px;width:179px;height:1px;background:#e2e2e2;"></div>
<svg class="a" style="left:206px;top:13px;" width="14" height="18" viewBox="0 0 14 18"><path d="M11,1.5 L6,9 L11,16.5" fill="none" stroke="#6a6a6a" stroke-width="1.1"/></svg>
<svg class="a" style="left:247px;top:13px;" width="14" height="18" viewBox="0 0 14 18"><path d="M4,2 L10,9 L4,16" fill="none" stroke="#efefef" stroke-width="1.1"/></svg>
<div class="a" style="left:296px;top:5px;width:496px;height:34px;background:#f5f5f5;border-radius:7px"></div>
<div class="a" style="left:296px;top:5px;width:40px;height:34px;background:linear-gradient(90deg,#ececec,#f5f5f5);border-radius:7px 0 0 7px"></div>
<div class="t s" style="left:298px;top:23.39px;font-size:16.2px;color:#b9b9b9;font-weight:700;">..iew</div>
<div class="t s" style="left:347px;top:23.39px;font-size:16.2px;color:#b9b9b9;">/</div>
<div class="t s" style="left:366px;top:23.39px;font-size:16.2px;color:#8c8c8c;font-weight:700;">1-Zeiss_5Angles_2Channels_1Timepoint_BEADS</div>
<svg class="a" style="left:770px;top:14px;" width="10" height="16" viewBox="0 0 10 16"><circle cx="5" cy="3.5" r="1.3" fill="#555"/><circle cx="5" cy="8" r="1.3" fill="#555"/><circle cx="5" cy="12.5" r="1.3" fill="#555"/></svg>
<svg class="a" style="left:806px;top:13px;" width="20" height="18" viewBox="0 0 20 18"><path d="M2,3 H7 L8.5,4.5 H16 V15 H2 Z" fill="none" stroke="#555" stroke-width="1.2"/><circle cx="11" cy="11" r="3.3" fill="#fff" stroke="#555" stroke-width="1.2"/><path d="M13.5,13.5L16,16" stroke="#555" stroke-width="1.3"/></svg>
<svg class="a" style="left:866px;top:14px;" width="16" height="16" viewBox="0 0 16 16"><rect x="2" y="2" width="5" height="5" fill="none" stroke="#555" stroke-width="1.2"/><rect x="9.5" y="2" width="5" height="5" fill="none" stroke="#555" stroke-width="1.2"/><rect x="2" y="9.5" width="5" height="5" fill="none" stroke="#555" stroke-width="1.2"/><rect x="9.5" y="9.5" width="5" height="5" fill="none" stroke="#555" stroke-width="1.2"/></svg>
<div class="a" style="left:890px;top:12px;width:1px;height:20px;background:#e8e8e8;"></div>
<svg class="a" style="left:894px;top:17px;" width="16" height="10" viewBox="0 0 16 10"><path d="M2.5,3 L8,8 L13.5,3" fill="none" stroke="#666" stroke-width="1.2"/></svg>
<div class="a" style="left:925px;top:11px;width:23px;height:23px;background:#f5f5f5;border-radius:50%"></div>
<svg class="a" style="left:929px;top:15px;" width="15" height="15" viewBox="0 0 15 15"><path d="M3.5,3.5L11.5,11.5M11.5,3.5L3.5,11.5" stroke="#6a6a6a" stroke-width="1.2"/></svg>
<div class="t s" style="left:222px;top:61.74px;font-size:12.3px;color:#b3b3b3;font-weight:700;">Name</div>
<svg class="a" style="left:262px;top:54px;" width="16" height="10" viewBox="0 0 16 10"><path d="M3,7 L8,2.5 L13,7" fill="none" stroke="#b3b3b3" stroke-width="1.2"/></svg>
<div class="t s" style="left:717px;top:61.63px;font-size:12.6px;color:#b3b3b3;font-weight:700;">Size</div>
<div class="t s" style="left:787px;top:61.63px;font-size:12.6px;color:#b3b3b3;font-weight:700;">Modified</div>
<div class="a" style="left:216px;top:91px;width:720px;height:44px;background:#ebd7eb;border-radius:8px"></div>
<svg class="a" style="left:240px;top:98px;" width="27" height="31" viewBox="0 0 27 31"><path d="M4,1.5 H19 L25.5,8 V26 Q25.5,29 22.5,29 H4 Q1.5,29 1.5,26 V4 Q1.5,1.5 4,1.5 Z" fill="#9a8a9a" fill-opacity=".25" transform="translate(0,1)"/><path d="M4,1.5 H19 L25.5,8 V26 Q25.5,28.5 23,28.5 H4 Q1.5,28.5 1.5,26 V4 Q1.5,1.5 4,1.5 Z" fill="#fbf9fb" stroke="#cfc6cf" stroke-width="1"/><path d="M19,1.5 V6 Q19,8 21,8 H25.5" fill="#ece6ec" stroke="#cfc6cf" stroke-width="1"/><path d="M9.5,12.5 L5,15.5 L9.5,18.5 M17.5,12.5 L22,15.5 L17.5,18.5 M15,11 L12,20" fill="none" stroke="#d774d7" stroke-width="1.1"/></svg>
<div class="t s" style="left:276px;top:114.21px;font-size:16.7px;color:#4a3f4a;">dataset.xml</div>
<svg class="a" style="left:369px;top:105px;" width="16" height="16" viewBox="0 0 16 16"><circle cx="8" cy="8" r="7.6" fill="#2a9a3c"/><path d="M4.3,8.2 L7,10.8 L11.8,5.8" fill="none" stroke="#fff" stroke-width="1.5"/></svg>
<div class="t s" style="left:718px;top:114.39px;font-size:16.2px;color:#8a7b8a;">11.2 kB</div>
<div class="t s" style="left:788px;top:114.39px;font-size:16.2px;color:#8a7b8a;">Today 17:03</div>
<svg class="a" style="left:904px;top:104px;" width="18" height="18" viewBox="0 0 18 18"><path d="M9,2.5 L10.8,6.8 L15.3,7 L11.8,9.8 L13,14.3 L9,11.8 L5,14.3 L6.2,9.8 L2.7,7 L7.2,6.8 Z" fill="none" stroke="#8a7b8a" stroke-width="1.1"/></svg>
<svg class="a" style="left:240px;top:150px;" width="27" height="31" viewBox="0 0 27 31"><rect x="1.5" y="2.5" width="24.5" height="27" rx="3" fill="#888" fill-opacity=".25"/><rect x="1.5" y="1.5" width="24.5" height="27" rx="3" fill="#f7f7f7" stroke="#c6c6c6" stroke-width="1"/><g font-family="Liberation Mono" font-size="7" fill="#8a8a8a" font-weight="700" text-anchor="middle"><text x="13.75" y="10.5">0100</text><text x="13.75" y="17.5">0010</text><text x="13.75" y="24.5">1001</text></g></svg>
<div class="t s" style="left:276px;top:166.21px;font-size:16.7px;color:#3d3d3d;">Gap-mCherry.czi</div>
<svg class="a" style="left:411px;top:157px;" width="16" height="16" viewBox="0 0 16 16"><circle cx="8" cy="8" r="7.6" fill="#2a9a3c"/><path d="M4.3,8.2 L7,10.8 L11.8,5.8" fill="none" stroke="#fff" stroke-width="1.5"/></svg>
<div class="t s" style="left:718px;top:166.39px;font-size:16.2px;color:#8a8a8a;">3.2 GB</div>
<div class="t s" style="left:788px;top:166.39px;font-size:16.2px;color:#8a8a8a;">14 Oct 2020</div>
<svg class="a" style="left:904px;top:156px;" width="18" height="18" viewBox="0 0 18 18"><path d="M9,2.5 L10.8,6.8 L15.3,7 L11.8,9.8 L13,14.3 L9,11.8 L5,14.3 L6.2,9.8 L2.7,7 L7.2,6.8 Z" fill="none" stroke="#8a8a8a" stroke-width="1.1"/></svg>
</div>
<div class="win" style="left:538px;top:168px;width:844px;height:826px;background:#fefefc;border-radius:12px 12px 8px 8px;box-shadow:0 3px 20px rgba(0,0,0,.3)"><div class="a" style="left:-538px;top:-168px">
<div class="a" style="left:538px;top:168px;width:844px;height:49px;background:#fefefe;"></div>
<div class="a" style="left:538px;top:217px;width:844px;height:1px;background:#e4e4e2;"></div>
<div class="t s" style="left:554.5px;top:193.46px;font-size:16px;color:#333333;font-weight:700;">Open</div>
<svg class="a" style="left:600px;top:187px;" width="14" height="10" viewBox="0 0 14 10"><path d="M2,2.5 L7,7.5 L12,2.5" fill="none" stroke="#444" stroke-width="1.3"/></svg>
<svg class="a" style="left:640px;top:185px;" width="17" height="15" viewBox="0 0 17 15"><path d="M1.5,13.5 H2.5 V2.5 Q2.5,1.5 3.5,1.5 H13.5 Q14.5,1.5 14.5,2.5 V13.5 H15.5" fill="none" stroke="#333" stroke-width="1.2"/><path d="M8.5,5V11M5.5,8H11.5" stroke="#333" stroke-width="1.2"/></svg>
<div class="t s" style="left:962px;top:184.68px;font-size:16.8px;color:#333333;font-weight:700;transform:translateX(-50%);">dataset.xml</div>
<div class="t s" style="left:696px;top:203.25px;font-size:13.7px;color:#8f8f8f;">~/Dropbox/Events/2025 EMBO LSM Dres… s_5Angles_2Channels_1Timepoint_BEADS</div>
<svg class="a" style="left:1268px;top:182px;" width="20" height="20" viewBox="0 0 20 20"><circle cx="10" cy="10" r="8.6" fill="none" stroke="#333" stroke-width="1.6"/><rect x="9" y="8.5" width="2" height="6" fill="#333"/><circle cx="10" cy="5.8" r="1.2" fill="#333"/></svg>
<svg class="a" style="left:1310px;top:185px;" width="16" height="14" viewBox="0 0 16 14"><path d="M1.5,2H14.5M1.5,7H14.5M1.5,12H14.5" stroke="#333" stroke-width="1.2"/></svg>
<div class="a" style="left:1347px;top:181px;width:23px;height:23px;background:#ebebeb;border-radius:50%"></div>
<svg class="a" style="left:1351px;top:185px;" width="15" height="15" viewBox="0 0 15 15"><path d="M3.5,3.5L11.5,11.5M11.5,3.5L3.5,11.5" stroke="#333" stroke-width="1.5"/></svg>
<div class="a" style="left:538px;top:385px;width:842px;height:25px;background:#f4f4f0;"></div>
<div class="a" style="left:737px;top:385px;width:156px;height:25px;background:#c6d9ee;"></div>
<div class="a" style="left:1375px;top:228px;width:3px;height:62px;background:#d8d8d8;border-radius:2px"></div>
<div class="t m" style="left:551px;top:244.40px;font-size:17.3px;color:#585858;transform:scaleY(1.13);transform-origin:0 4px"><span style="color:#d89a10;font-weight:700">&lt;?xml</span><span style="color:#585858"> </span><span style="color:#c65a22">version=</span><span style="color:#6060a2">"1.0"</span><span style="color:#585858"> </span><span style="color:#c65a22">encoding=</span><span style="color:#6060a2">"</span><span style="color:#6060a2;text-decoration:underline dotted #e01b24;text-underline-offset:3px;text-decoration-thickness:1px">UTF</span><span style="color:#6060a2">-8"</span><span style="color:#d89a10;font-weight:700">?&gt;</span></div>
<div class="t m" style="left:551px;top:270.40px;font-size:17.3px;color:#585858;transform:scaleY(1.13);transform-origin:0 4px"><span style="color:#33938a">&lt;SpimData</span><span style="color:#585858"> </span><span style="color:#c65a22">version=</span><span style="color:#6060a2">"0.2"</span><span style="color:#33938a">&gt;</span></div>
<div class="t m" style="left:551px;top:296.40px;font-size:17.3px;color:#585858;transform:scaleY(1.13);transform-origin:0 4px">  <span style="color:#33938a">&lt;BasePath</span><span style="color:#585858"> </span><span style="color:#c65a22">type=</span><span style="color:#6060a2">"relative"</span><span style="color:#33938a">&gt;</span><span style="color:#585858">.</span><span style="color:#33938a">&lt;/BasePath&gt;</span></div>
<div class="t m" style="left:551px;top:322.40px;font-size:17.3px;color:#585858;transform:scaleY(1.13);transform-origin:0 4px">  <span style="color:#33938a">&lt;SequenceDescription&gt;</span></div>
<div class="t m" style="left:551px;top:348.40px;font-size:17.3px;color:#585858;transform:scaleY(1.13);transform-origin:0 4px">    <span style="color:#33938a">&lt;ImageLoader</span><span style="color:#585858"> </span><span style="color:#c65a22">format=</span><span style="color:#6060a2">"</span><span style="color:#6060a2;text-decoration:underline dotted #e01b24;text-underline-offset:3px;text-decoration-thickness:1px">spimreconstruction</span><span style="color:#6060a2">.</span><span style="color:#6060a2;text-decoration:underline dotted #e01b24;text-underline-offset:3px;text-decoration-thickness:1px">lightsheetz1</span><span style="color:#6060a2">"</span><span style="color:#33938a">&gt;</span></div>
<div class="t m" style="left:551px;top:374.40px;font-size:17.3px;color:#585858;transform:scaleY(1.13);transform-origin:0 4px">      <span style="color:#33938a">&lt;imagedirectory</span><span style="color:#585858"> </span><span style="color:#c65a22">type=</span><span style="color:#6060a2">"relative"</span><span style="color:#33938a">&gt;</span><span style="color:#585858">.</span><span style="color:#33938a">&lt;/imagedirectory&gt;</span></div>
<div class="t m" style="left:551px;top:400.40px;font-size:17.3px;color:#585858;transform:scaleY(1.13);transform-origin:0 4px">      <span style="color:#33938a">&lt;masterfile&gt;</span><span style="color:#585858">Gap-</span><span style="color:#585858;text-decoration:underline dotted #e01b24;text-underline-offset:3px;text-decoration-thickness:1px">mCherry</span><span style="color:#585858">.czi</span><span style="color:#33938a">&lt;/masterfile&gt;</span></div>
<div class="t m" style="left:551px;top:426.40px;font-size:17.3px;color:#585858;transform:scaleY(1.13);transform-origin:0 4px">      <span style="color:#33938a">&lt;imglib2container&gt;</span><span style="color:#585858">ArrayImgFactory</span><span style="color:#33938a">&lt;/imglib2container&gt;</span></div>
<div class="t m" style="left:551px;top:452.40px;font-size:17.3px;color:#585858;transform:scaleY(1.13);transform-origin:0 4px">    <span style="color:#33938a">&lt;/ImageLoader&gt;</span></div>
<div class="t m" style="left:551px;top:478.40px;font-size:17.3px;color:#585858;transform:scaleY(1.13);transform-origin:0 4px">    <span style="color:#33938a">&lt;ViewSetups&gt;</span></div>
<div class="t m" style="left:551px;top:504.40px;font-size:17.3px;color:#585858;transform:scaleY(1.13);transform-origin:0 4px">      <span style="color:#33938a">&lt;ViewSetup&gt;</span></div>
<div class="t m" style="left:551px;top:530.40px;font-size:17.3px;color:#585858;transform:scaleY(1.13);transform-origin:0 4px">        <span style="color:#33938a">&lt;id&gt;</span><span style="color:#585858">0</span><span style="color:#33938a">&lt;/id&gt;</span></div>
<div class="t m" style="left:551px;top:556.40px;font-size:17.3px;color:#585858;transform:scaleY(1.13);transform-origin:0 4px">        <span style="color:#33938a">&lt;size&gt;</span><span style="color:#585858">1400 1920 60</span><span style="color:#33938a">&lt;/size&gt;</span></div>
<div class="t m" style="left:551px;top:582.40px;font-size:17.3px;color:#585858;transform:scaleY(1.13);transform-origin:0 4px">        <span style="color:#33938a">&lt;voxelSize&gt;</span></div>
<div class="t m" style="left:551px;top:608.40px;font-size:17.3px;color:#585858;transform:scaleY(1.13);transform-origin:0 4px">          <span style="color:#33938a">&lt;unit&gt;</span><span style="color:#585858">um</span><span style="color:#33938a">&lt;/unit&gt;</span></div>
<div class="t m" style="left:551px;top:634.40px;font-size:17.3px;color:#585858;transform:scaleY(1.13);transform-origin:0 4px">          <span style="color:#33938a">&lt;size&gt;</span><span style="color:#585858">0.2758360207080841 0.2758360207080841 3.0</span><span style="color:#33938a">&lt;/size&gt;</span></div>
<div class="t m" style="left:551px;top:660.40px;font-size:17.3px;color:#585858;transform:scaleY(1.13);transform-origin:0 4px">        <span style="color:#33938a">&lt;/voxelSize&gt;</span></div>
<div class="t m" style="left:551px;top:686.40px;font-size:17.3px;color:#585858;transform:scaleY(1.13);transform-origin:0 4px">        <span style="color:#33938a">&lt;attributes&gt;</span></div>
<div class="t m" style="left:551px;top:712.40px;font-size:17.3px;color:#585858;transform:scaleY(1.13);transform-origin:0 4px">          <span style="color:#33938a">&lt;illumination&gt;</span><span style="color:#585858">0</span><span style="color:#33938a">&lt;/illumination&gt;</span></div>
<div class="t m" style="left:551px;top:738.40px;font-size:17.3px;color:#585858;transform:scaleY(1.13);transform-origin:0 4px">          <span style="color:#33938a">&lt;channel&gt;</span><span style="color:#585858">0</span><span style="color:#33938a">&lt;/channel&gt;</span></div>
<div class="t m" style="left:551px;top:764.40px;font-size:17.3px;color:#585858;transform:scaleY(1.13);transform-origin:0 4px">          <span style="color:#33938a">&lt;tile&gt;</span><span style="color:#585858">0</span><span style="color:#33938a">&lt;/tile&gt;</span></div>
<div class="t m" style="left:551px;top:790.40px;font-size:17.3px;color:#585858;transform:scaleY(1.13);transform-origin:0 4px">          <span style="color:#33938a">&lt;angle&gt;</span><span style="color:#585858">0</span><span style="color:#33938a">&lt;/angle&gt;</span></div>
<div class="t m" style="left:551px;top:816.40px;font-size:17.3px;color:#585858;transform:scaleY(1.13);transform-origin:0 4px">        <span style="color:#33938a">&lt;/attributes&gt;</span></div>
<div class="t m" style="left:551px;top:842.40px;font-size:17.3px;color:#585858;transform:scaleY(1.13);transform-origin:0 4px">      <span style="color:#33938a">&lt;/ViewSetup&gt;</span></div>
<div class="t m" style="left:551px;top:868.40px;font-size:17.3px;color:#585858;transform:scaleY(1.13);transform-origin:0 4px">      <span style="color:#33938a">&lt;ViewSetup&gt;</span></div>
<div class="t m" style="left:551px;top:894.40px;font-size:17.3px;color:#585858;transform:scaleY(1.13);transform-origin:0 4px">        <span style="color:#33938a">&lt;id&gt;</span><span style="color:#585858">1</span><span style="color:#33938a">&lt;/id&gt;</span></div>
<div class="t m" style="left:551px;top:920.40px;font-size:17.3px;color:#585858;transform:scaleY(1.13);transform-origin:0 4px">        <span style="color:#33938a">&lt;size&gt;</span><span style="color:#585858">1400 1920 60</span><span style="color:#33938a">&lt;/size&gt;</span></div>
<div class="t m" style="left:551px;top:946.40px;font-size:17.3px;color:#585858;transform:scaleY(1.13);transform-origin:0 4px">        <span style="color:#33938a">&lt;voxelSize&gt;</span></div>
<div class="t m" style="left:551px;top:972.40px;font-size:17.3px;color:#585858;transform:scaleY(1.13);transform-origin:0 4px">          <span style="color:#33938a">&lt;unit&gt;</span><span style="color:#585858">um</span><span style="color:#33938a">&lt;/unit&gt;</span></div>
<div class="t m" style="left:551px;top:998.40px;font-size:17.3px;color:#585858;transform:scaleY(1.13);transform-origin:0 4px">          <span style="color:#33938a">&lt;size&gt;</span><span style="color:#585858">0.2758360207080841 0.2758360207080841 3.0</span><span style="color:#33938a">&lt;/size&gt;</span></div>
<svg class="a" style="left:915px;top:509px;" width="12" height="22" viewBox="0 0 12 22"><path d="M2,1.5H10M6,1.5V20.5M2,20.5H10" stroke="#fff" stroke-width="3"/><path d="M2,1.5H10M6,1.5V20.5M2,20.5H10" stroke="#222" stroke-width="1.2"/></svg>
</div></div>
</body></html>
